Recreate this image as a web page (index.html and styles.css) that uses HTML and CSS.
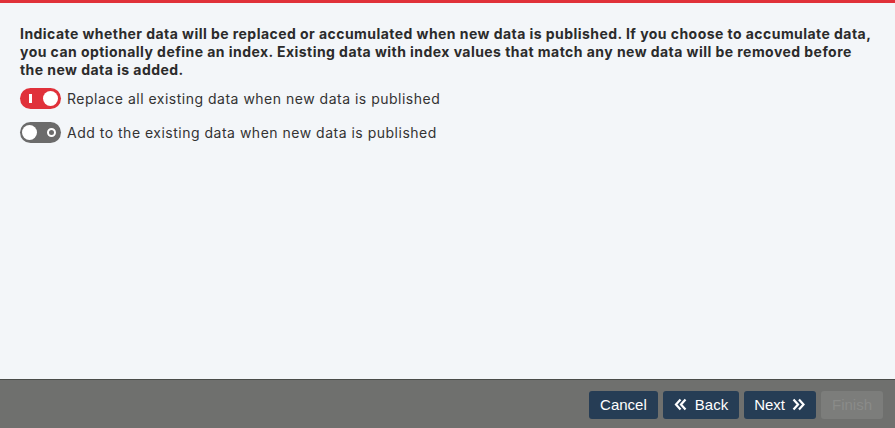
FILE: index.html
```html
<!DOCTYPE html>
<html>
<head>
<meta charset="utf-8">
<link rel="stylesheet" href="styles.css">
</head>
<body>
<div class="page">
  <div class="topbar"></div>
  <main class="content">
    <p class="intro">Indicate whether data will be replaced or accumulated when new data is published. If you choose to accumulate data,<br>you can optionally define an index. Existing data with index values that match any new data will be removed before<br>the new data is added.</p>
    <div class="option">
      <span class="toggle on"><span class="mark bar"></span><span class="knob"></span></span>
      <span class="label">Replace all existing data when new data is published</span>
    </div>
    <div class="option">
      <span class="toggle off"><span class="knob"></span><span class="mark ring"></span></span>
      <span class="label">Add to the existing data when new data is published</span>
    </div>
  </main>
  <footer class="footer">
    <button class="btn wide">Cancel</button>
    <button class="btn wide"><svg class="chev" width="13" height="13" viewBox="0 0 13 13"><path d="M6.5 1.5 L2 6.5 L6.5 11.5 M11.5 1.5 L7 6.5 L11.5 11.5" fill="none" stroke="#fff" stroke-width="2.2"/></svg>Back</button>
    <button class="btn">Next<svg class="chev after" width="14" height="13" viewBox="0 0 14 13"><path d="M1.5 1.5 L6 6.5 L1.5 11.5 M7 1.5 L11.5 6.5 L7 11.5" fill="none" stroke="#fff" stroke-width="2.2"/></svg></button>
    <button class="btn disabled">Finish</button>
  </footer>
</div>
</body>
</html>
```
FILE: styles.css
```css
html, body { margin: 0; padding: 0; }
body { width: 895px; height: 428px; overflow: hidden; background: #f3f6f9; font-family: Inter, "Noto Sans", sans-serif; }
.page { display: flex; flex-direction: column; height: 428px; }
.topbar { height: 3px; background: #e0313a; flex: none; }
.content { flex: 1; padding: 22px 20px 0 20px; }
.intro { margin: 0 0 2px 0; font-size: 14px; font-weight: 700; line-height: 18px; color: #2b2b2b; letter-spacing: 0.45px; white-space: nowrap; }
.option { display: flex; align-items: center; gap: 6px; height: 34px; }
.label { font-size: 14px; color: #333; letter-spacing: 0.5px; }
.toggle { width: 41px; height: 21px; border-radius: 11px; display: flex; align-items: center; justify-content: space-between; padding: 0 3px; box-sizing: border-box; flex: none; }
.toggle.on { background: #e0313a; padding-left: 9px; }
.toggle.off { background: #6b6b6b; padding-left: 2px; padding-right: 5px; }
.knob { width: 15px; height: 15px; border-radius: 50%; background: #fff; }
.mark.bar { width: 3px; height: 9px; background: #fff; }
.mark.ring { width: 9px; height: 9px; box-sizing: border-box; border: 2.5px solid #fff; border-radius: 50%; }
.footer { flex: none; height: 48px; background: #6f706e; border-top: 1px solid #4a4c4a; display: flex; justify-content: flex-end; align-items: center; gap: 5px; padding: 0 12px 0 0; }
.btn { height: 28px; padding: 0 10px; border: none; border-radius: 3px; background: #263d55; color: #fff; font-family: "Liberation Sans", Arial, sans-serif; font-size: 15px; margin-top: 1px; display: flex; align-items: center; }
.btn.wide { padding: 0 11px; }
.btn .chev { margin-right: 8px; }
.btn .chev.after { margin: 0 0 0 7px; }
.btn.disabled { background: #7c7d7b; color: #8a8b89; padding: 0 11px; }
```
